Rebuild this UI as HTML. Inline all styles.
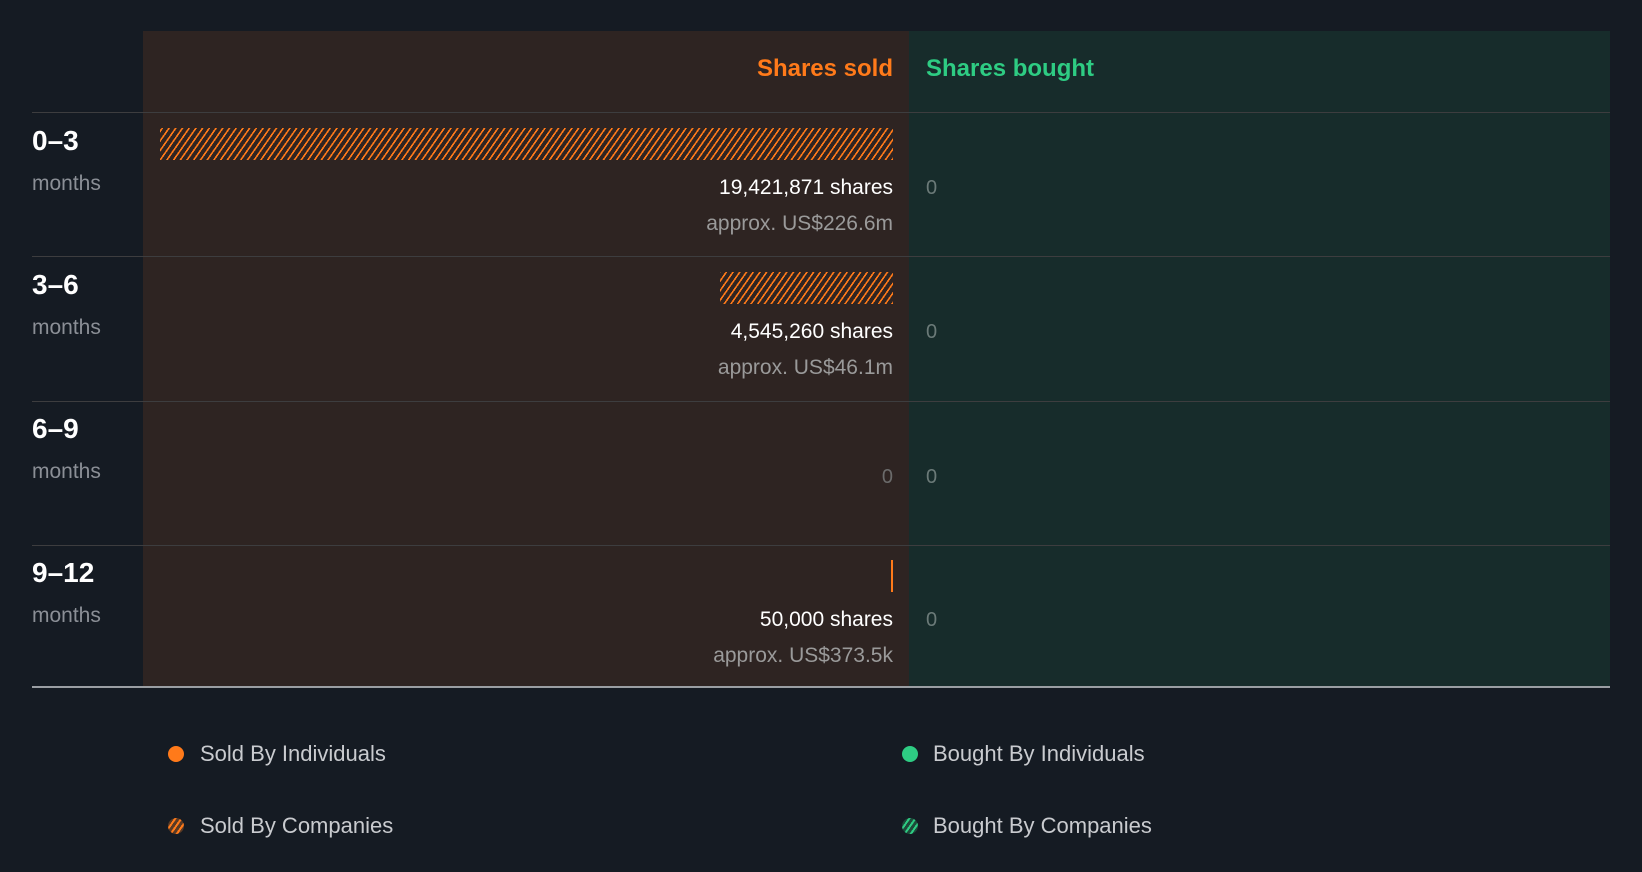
<!DOCTYPE html>
<html><head><meta charset="utf-8"><style>
*{margin:0;padding:0;box-sizing:border-box}
body{width:1642px;height:872px;background:#151b23;font-family:"Liberation Sans",sans-serif;position:relative;overflow:hidden}
.a{position:absolute}
.red{left:143px;top:31px;width:766px;height:656px;background:#2e2422}
.grn{left:909px;top:31px;width:701px;height:656px;background:#172c2b}
.hl{left:32px;width:1578px;height:1px;background:#3d3d3f}
.hatch{background:repeating-linear-gradient(-55deg,#ff7a1a 0 1.6px,transparent 1.6px 5.5px)}
.lab{left:32px;color:#fff;font-weight:bold;font-size:28px}
.mo{left:32px;color:#8b8f96;font-size:21px}
.sh{right:749px;color:#fff;font-size:21px;text-align:right}
.ap{right:749px;color:#9a9a9a;font-size:21px;text-align:right}
.z{left:926px;color:#6b7a78;font-size:20px}
.lg{color:#c9cbcf;font-size:22px}
.dot{width:16px;height:16px;border-radius:50%}
</style></head><body>
<div class="a red"></div><div class="a grn"></div>
<div class="a" style="right:749px;top:55px;color:#ff7a1a;font-weight:bold;font-size:24px">Shares sold</div>
<div class="a" style="left:926px;top:55px;color:#2ecc83;font-weight:bold;font-size:24px">Shares bought</div>
<div class="a hl" style="top:112px"></div>
<div class="a hl" style="top:256px"></div>
<div class="a hl" style="top:401px"></div>
<div class="a hl" style="top:545px"></div>
<div class="a" style="left:32px;top:686px;width:1578px;height:2px;background:#9a9ea3"></div>

<div class="a lab" style="top:125px">0–3</div><div class="a mo" style="top:172px">months</div>
<div class="a lab" style="top:269px">3–6</div><div class="a mo" style="top:316px">months</div>
<div class="a lab" style="top:413px">6–9</div><div class="a mo" style="top:460px">months</div>
<div class="a lab" style="top:557px">9–12</div><div class="a mo" style="top:604px">months</div>

<div class="a hatch" style="left:160px;top:128px;width:733px;height:32px"></div>
<div class="a sh" style="top:176px">19,421,871 shares</div>
<div class="a ap" style="top:212px">approx. US$226.6m</div>
<div class="a z" style="top:177px">0</div>

<div class="a hatch" style="left:720px;top:272px;width:173px;height:32px"></div>
<div class="a sh" style="top:320px">4,545,260 shares</div>
<div class="a ap" style="top:356px">approx. US$46.1m</div>
<div class="a z" style="top:321px">0</div>

<div class="a" style="right:749px;top:466px;color:#6b6b6b;font-size:20px">0</div>
<div class="a z" style="top:466px">0</div>

<div class="a" style="left:891px;top:560px;width:2px;height:32px;background:#ff7a1a"></div>
<div class="a sh" style="top:608px">50,000 shares</div>
<div class="a ap" style="top:644px">approx. US$373.5k</div>
<div class="a z" style="top:609px">0</div>

<div class="a dot" style="left:168px;top:746px;background:#ff7a1a"></div>
<div class="a lg" style="left:200px;top:741px">Sold By Individuals</div>
<div class="a dot" style="left:168px;top:818px;background:repeating-linear-gradient(-55deg,#ff7a1a 0 2px,#5a3a25 2px 5px)"></div>
<div class="a lg" style="left:200px;top:813px">Sold By Companies</div>
<div class="a dot" style="left:902px;top:746px;background:#2ecc83"></div>
<div class="a lg" style="left:933px;top:741px">Bought By Individuals</div>
<div class="a dot" style="left:902px;top:818px;background:repeating-linear-gradient(-55deg,#2ecc83 0 2px,#1d4a3a 2px 5px)"></div>
<div class="a lg" style="left:933px;top:813px">Bought By Companies</div>
</body></html>
